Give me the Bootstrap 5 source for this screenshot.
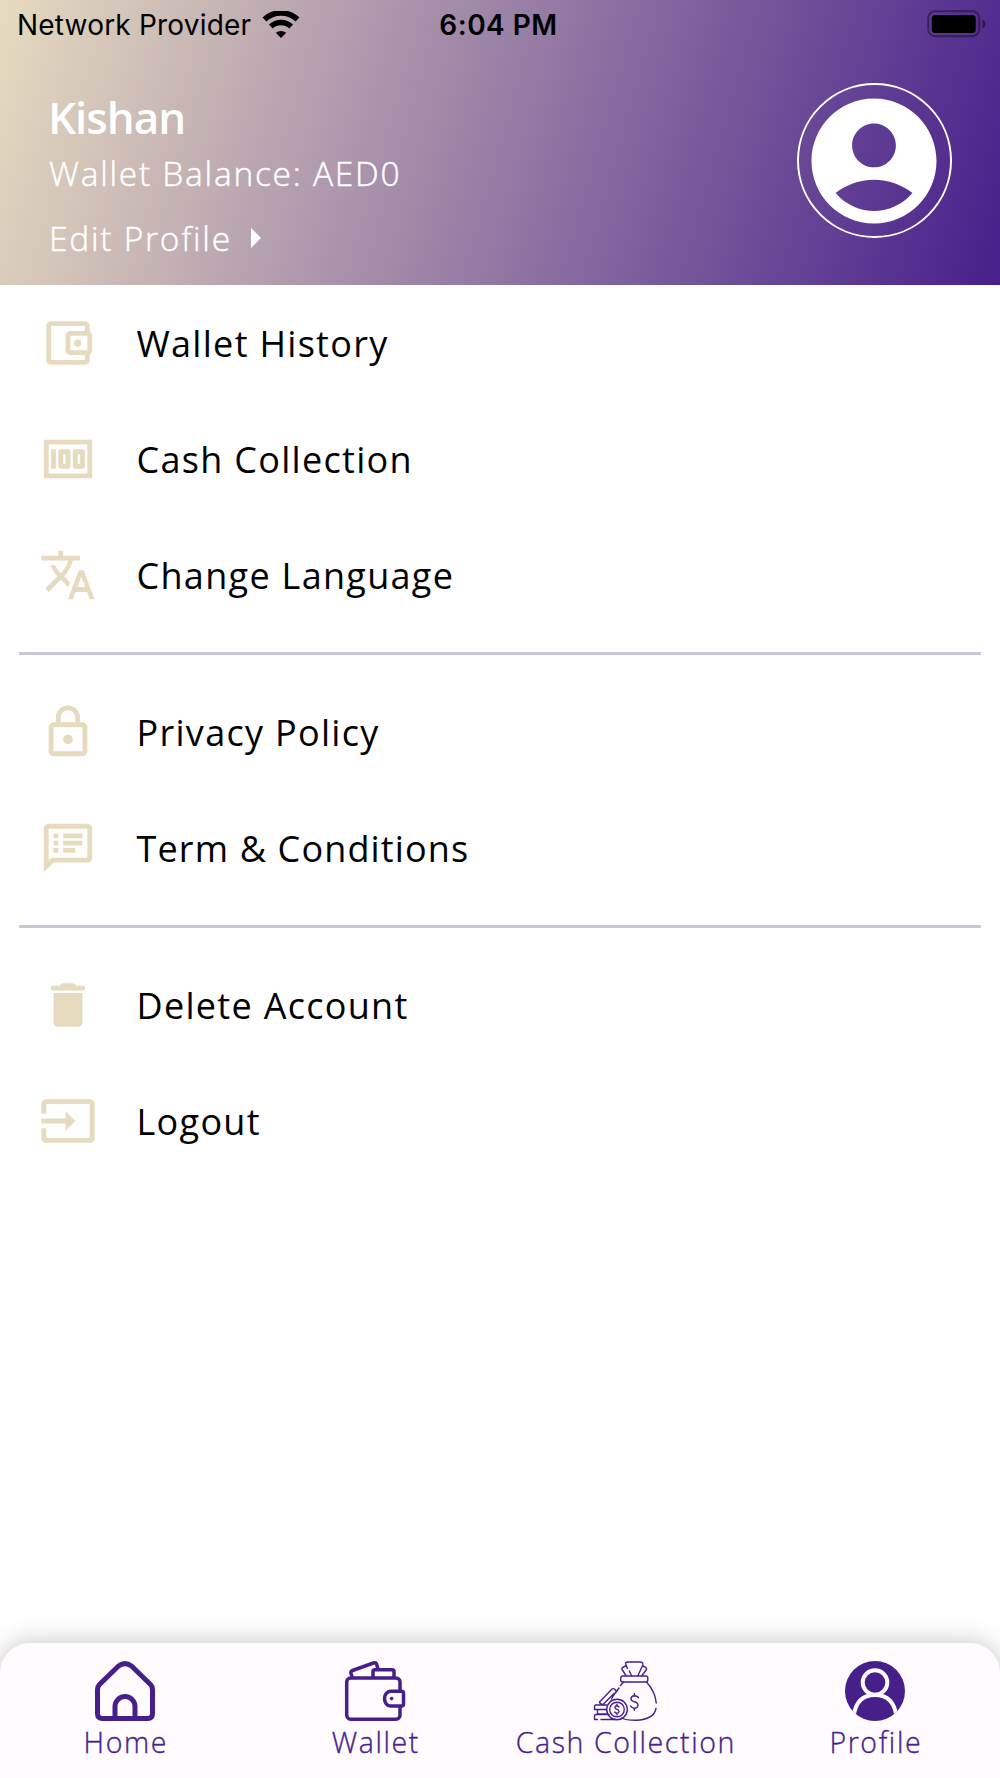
<!DOCTYPE html>
<html lang="en">
<head>
<meta charset="utf-8">
<meta name="viewport" content="width=device-width, initial-scale=1">
<title>Profile</title>
<link href="https://cdn.jsdelivr.net/npm/bootstrap@5.3.0/dist/css/bootstrap.min.css" rel="stylesheet">
<style>
  :root { --brand: #461f8b; --sand: #e7dbbf; }
  body { font-family: "Open Sans", sans-serif; color: #000; }
  .screen { width: 1000px; height: 1778px; }
  .hero { height: 285px; background: linear-gradient(105.9deg, #e7dbbf, #461f8b); }
  .status { height: 51px; padding: 0 14px 0 17px; font-family: Inter, sans-serif; font-size: 28px; line-height: 51px; }
  .status-side { flex: 1 1 0; }
  .status-name { letter-spacing: .2px; }
  .status-time { font-weight: 600; letter-spacing: .5px; margin: 0 3px 0 -3px; }
  .hero-body { padding: 32px 48.5px 0 49px; }
  .hero-name { font-size: 44px; line-height: 60px; font-weight: 600; letter-spacing: -1px; margin: 4px 0 1px -1px; }
  .hero-line { font-size: 33.5px; line-height: 50px; font-weight: 300; letter-spacing: 1.75px; -webkit-text-stroke: .45px #fff; }
  .hero-edit { margin-top: 15px; }
  .avatar { width: 155px; height: 155px; border: 2.7px solid #fff; }
  .entry { height: 116px; padding-left: 39px; font-size: 36px; letter-spacing: 1.3px; }
  .entry svg { width: 58px; height: 58px; margin-right: 39.500px; fill: var(--sand); }
  .entry span { padding-top: 2px; }
  .entry .label-tight { letter-spacing: 1.15px; }
  .rule-wrap { height: 41px; padding: 0 19px; }
  .rule-line { height: 3px; background: #cbc5d5; }
  .tabs { height: 135px; background: #fffbff; border-radius: 30px 30px 0 0; box-shadow: 0 0 26px rgba(0,0,0,.24); color: var(--brand); }
  .tabs a { flex: 1 1 0; padding-top: 18px; font-size: 28.500px; line-height: 38px; font-weight: 300; letter-spacing: 1.6px; -webkit-text-stroke: .35px var(--brand); }
  .tabs span { margin-right: -1.600px; }
  .tabs svg { width: 64px; height: 60px; margin-bottom: 2px; }
</style>
<script src="https://cdn.jsdelivr.net/npm/bootstrap@5.3.0/dist/js/bootstrap.bundle.min.js"></script>
</head>
<body>
<div class="screen d-flex flex-column overflow-hidden bg-white">
  <header class="hero">
    <div class="status d-flex align-items-center">
      <div class="status-side d-flex align-items-center">
        <span class="status-name">Network Provider</span>
        <svg class="ms-2" width="44" height="30" viewBox="0 0 44 30" fill="none" stroke="#000">
          <path d="M5.500 8.500a24 24 0 0 1 33 0" stroke-width="5.600"/>
          <path d="M11.800 15.500a15 15 0 0 1 20.400 0" stroke-width="5.400"/>
          <path d="M22 27l-5.200-5.200a8 8 0 0 1 10.400 0z" fill="#000" stroke="none"/>
        </svg>
      </div>
      <span class="status-time">6:04 PM</span>
      <div class="status-side d-flex justify-content-end">
        <svg class="mb-1" width="59" height="28" viewBox="0 0 59 28">
          <rect x="1.200" y="1.200" width="51" height="25" rx="7" fill="none" stroke="#000" stroke-opacity=".4" stroke-width="2"/>
          <rect x="4.700" y="4.900" width="44" height="18" rx="3.500"/>
          <path d="M55.500 9.500q3 1.500 3 4.500t-3 4.500z" fill-opacity=".45"/>
        </svg>
      </div>
    </div>
    <div class="hero-body d-flex justify-content-between align-items-start text-white">
      <div>
        <div class="hero-name">Kishan</div>
        <div class="hero-line">Wallet Balance: AED0</div>
        <div class="hero-line hero-edit d-flex align-items-center">Edit Profile
          <svg class="ms-3" width="14" height="20" viewBox="0 0 14 20" fill="#fff"><path d="M3 0l10 10L3 20z"/></svg>
        </div>
      </div>
      <div class="avatar rounded-circle d-flex align-items-center justify-content-center flex-shrink-0">
        <svg class="flex-shrink-0" width="150" height="150" viewBox="0 0 24 24" fill="#fff"><path d="M12 2C6.480 2 2 6.480 2 12s4.480 10 10 10 10-4.480 10-10S17.520 2 12 2zm0 4c1.930 0 3.500 1.570 3.500 3.500S13.930 13 12 13s-3.500-1.570-3.500-3.500S10.070 6 12 6zm0 14c-2.030 0-4.430-.82-6.140-2.880C7.550 15.800 9.680 15 12 15s4.450.8 6.140 2.120C16.430 19.180 14.030 20 12 20z"/></svg>
      </div>
    </div>
  </header>

  <main class="flex-grow-1">
    <div class="entry d-flex align-items-center">
      <svg viewBox="0 0 24 24"><path d="M21 7.280V5c0-1.100-.9-2-2-2H5c-1.110 0-2 .9-2 2v14c0 1.100.89 2 2 2h14c1.100 0 2-.9 2-2v-2.280c.59-.35 1-.98 1-1.720V9c0-.74-.41-1.370-1-1.720zM20 9v6h-7V9h7zM5 19V5h14v2h-6c-1.100 0-2 .9-2 2v6c0 1.100.9 2 2 2h6v2H5z"/><circle cx="16" cy="12" r="1.500"/></svg>
      <span>Wallet History</span>
    </div>
    <div class="entry d-flex align-items-center">
      <svg viewBox="0 0 24 24"><path d="M5 8h2v8H5zm7 0H9c-.55 0-1 .45-1 1v6c0 .55.45 1 1 1h3c.55 0 1-.45 1-1V9c0-.55-.45-1-1-1zm-1 6h-1v-4h1v4zm7-6h-3c-.55 0-1 .45-1 1v6c0 .55.45 1 1 1h3c.55 0 1-.45 1-1V9c0-.55-.45-1-1-1zm-1 6h-1v-4h1v4zM2 4v16h20V4H2zm2 14V6h16v12H4z"/></svg>
      <span>Cash Collection</span>
    </div>
    <div class="entry d-flex align-items-center">
      <svg viewBox="0 0 24 24"><path d="M12.870 15.070l-2.540-2.510.03-.03A17.520 17.520 0 0 0 14.070 6H17V4h-7V2H8v2H1v1.990h11.170C11.500 7.920 10.440 9.750 9 11.350 8.070 10.320 7.300 9.190 6.690 8h-2c.73 1.630 1.730 3.170 2.980 4.560l-5.090 5.020L4 19l5-5 3.110 3.110.76-2.040zM18.500 10h-2L12 22h2l1.120-3h4.750L21 22h2l-4.500-12zm-2.620 7l1.620-4.330L19.120 17h-3.240z"/></svg>
      <span>Change Language</span>
    </div>
    <div class="rule-wrap d-flex flex-column justify-content-center"><div class="rule-line"></div></div>
    <div class="entry d-flex align-items-center">
      <svg viewBox="0 0 24 24"><path d="M18 8h-1V6c0-2.760-2.240-5-5-5S7 3.240 7 6v2H6c-1.100 0-2 .9-2 2v10c0 1.100.9 2 2 2h12c1.100 0 2-.9 2-2V10c0-1.100-.9-2-2-2zM9 6c0-1.660 1.340-3 3-3s3 1.340 3 3v2H9V6zm9 14H6V10h12v10zm-6-3c1.100 0 2-.9 2-2s-.9-2-2-2-2 .9-2 2 .9 2 2 2z"/></svg>
      <span>Privacy Policy</span>
    </div>
    <div class="entry d-flex align-items-center">
      <svg viewBox="0 0 24 24"><path d="M20 2H4c-1.100 0-1.990.9-1.990 2L2 22l4-4h14c1.100 0 2-.9 2-2V4c0-1.100-.9-2-2-2zm0 14H5.170l-.59.59-.58.58V4h16v12zM6 12h2v2H6zm0-3h2v2H6zm0-3h2v2H6zm4 6h5v2h-5zm0-3h8v2h-8zm0-3h8v2h-8z"/></svg>
      <span class="label-tight">Term &amp; Conditions</span>
    </div>
    <div class="rule-wrap d-flex flex-column justify-content-center"><div class="rule-line"></div></div>
    <div class="entry d-flex align-items-center">
      <svg viewBox="0 0 24 24"><path d="M6 19c0 1.100.9 2 2 2h8c1.100 0 2-.9 2-2V7H6v12zM19 4h-3.500l-1-1h-5l-1 1H5v2h14V4z"/></svg>
      <span>Delete Account</span>
    </div>
    <div class="entry d-flex align-items-center">
      <svg viewBox="0 0 24 24"><path d="M21 3.010H3c-1.100 0-2 .9-2 2V9h2V4.990h18v14.030H3V15H1v4.010c0 1.100.9 1.980 2 1.980h18c1.100 0 2-.88 2-1.980v-14c0-1.110-.9-2-2-2zM11 16l4-4-4-4v3H1v2h10v3z"/></svg>
      <span>Logout</span>
    </div>
  </main>

  <nav class="tabs d-flex text-center">
    <a class="d-flex flex-column align-items-center text-reset text-decoration-none">
      <svg viewBox="0 0 64 60" fill="none" stroke="currentColor" stroke-width="5" stroke-linejoin="round"><path d="M25.500 5Q32 .2 38.500 5L57.500 23.500Q59.500 25.500 59.500 28.500V52.500Q59.500 57.500 54.500 57.500H9.500Q4.500 57.500 4.500 52.500V28.500Q4.500 25.500 6.500 23.500Z"/><path d="M22 57V45.500a10 10 0 0 1 20 0V57"/></svg>
      <span>Home</span>
    </a>
    <a class="d-flex flex-column align-items-center text-reset text-decoration-none">
      <svg viewBox="0 0 64 60" fill="none" stroke="currentColor" stroke-width="3.500" stroke-linejoin="round"><rect x="3.700" y="17" width="53.300" height="41.200" rx="4"/><path d="M9.500 17L8 12.500Q7.300 10.300 9.500 9.500L30.500 2Q33 1.200 33.700 3.400L35 8"/><path d="M30 17V10.500Q30 8.700 31.800 8.700H49Q51 8.700 51 10.700V17"/><path d="M47.500 30.200H58.500Q60.500 30.200 60.500 32.200V43Q60.500 45 58.500 45H47.500A6 7.400 0 0 1 47.500 30.200Z" fill="#fffbff"/><circle cx="48.600" cy="37.600" r="1.800" fill="currentColor" stroke="none"/></svg>
      <span>Wallet</span>
    </a>
    <a class="d-flex flex-column align-items-center text-reset text-decoration-none">
      <svg viewBox="0 0 64 60" fill="none" stroke="currentColor" stroke-width="1.400" stroke-linecap="round" stroke-linejoin="round">
        <path d="M33 4Q31.500 1 35 1H47Q50.500 1 49.800 4L45 14.500M38.500 14.500L36.300 10M32.500 5Q28.500 6.500 29 8.500L33 14.500M33 4L34.500 7.500M50 5Q54 6.500 53.500 8.500L49 14.500"/>
        <rect x="27.800" y="15" width="27" height="6" rx="2"/>
        <path d="M30.500 21L27.500 24.500M53.500 21Q62.500 31 63.200 42M63 47.500Q61 58.500 43 59.300Q33 59.300 28.500 57"/>
        <path d="M45.500 36.500Q44 34.700 41.300 34.700Q38 35 38 37.800Q38 40 41.300 40.800Q45 41.500 45 44.500Q44.500 47.300 41.500 47.300Q38.500 47 37.500 45M41.400 32.500V34.500M41.400 47.500V49.300"/>
        <path d="M26 27L22.500 32M6.500 41L19 28Q20.500 27 22 28.500L23 30M6.500 41Q7 43.500 10 43.500L21 32.500M22 32L18.500 38"/>
        <path d="M13.500 44H3Q1.500 44 1.500 46V48.500H13.500M4.500 48.500V53H14.500M16 53.500H3Q1.500 53.500 1.500 55.500V58.500H4.500M8 58.500H22"/>
        <circle cx="24" cy="48.500" r="10.300"/><circle cx="24" cy="48.500" r="7.300"/>
        <path d="M26 46Q25 44.700 23.800 44.700Q21.800 45 22 46.700Q22.500 48 24 48.400Q26 49 26 50.600Q25.500 52.300 24 52.300Q22.500 52 21.800 51M24 43.200V44.500M24 52.500V53.800"/>
      </svg>
      <span>Cash Collection</span>
    </a>
    <a class="d-flex flex-column align-items-center text-reset text-decoration-none">
      <svg viewBox="0 0 64 60"><defs><clipPath id="disc"><circle cx="32" cy="30" r="30"/></clipPath></defs><circle cx="32" cy="30" r="30" fill="currentColor"/><g clip-path="url(#disc)" fill="none" stroke="#fffbff" stroke-width="4"><circle cx="32" cy="21.500" r="12.300"/><path d="M10.500 56Q13 34 32 34T53.500 56"/></g></svg>
      <span>Profile</span>
    </a>
  </nav>
</div>
</body>
</html>
